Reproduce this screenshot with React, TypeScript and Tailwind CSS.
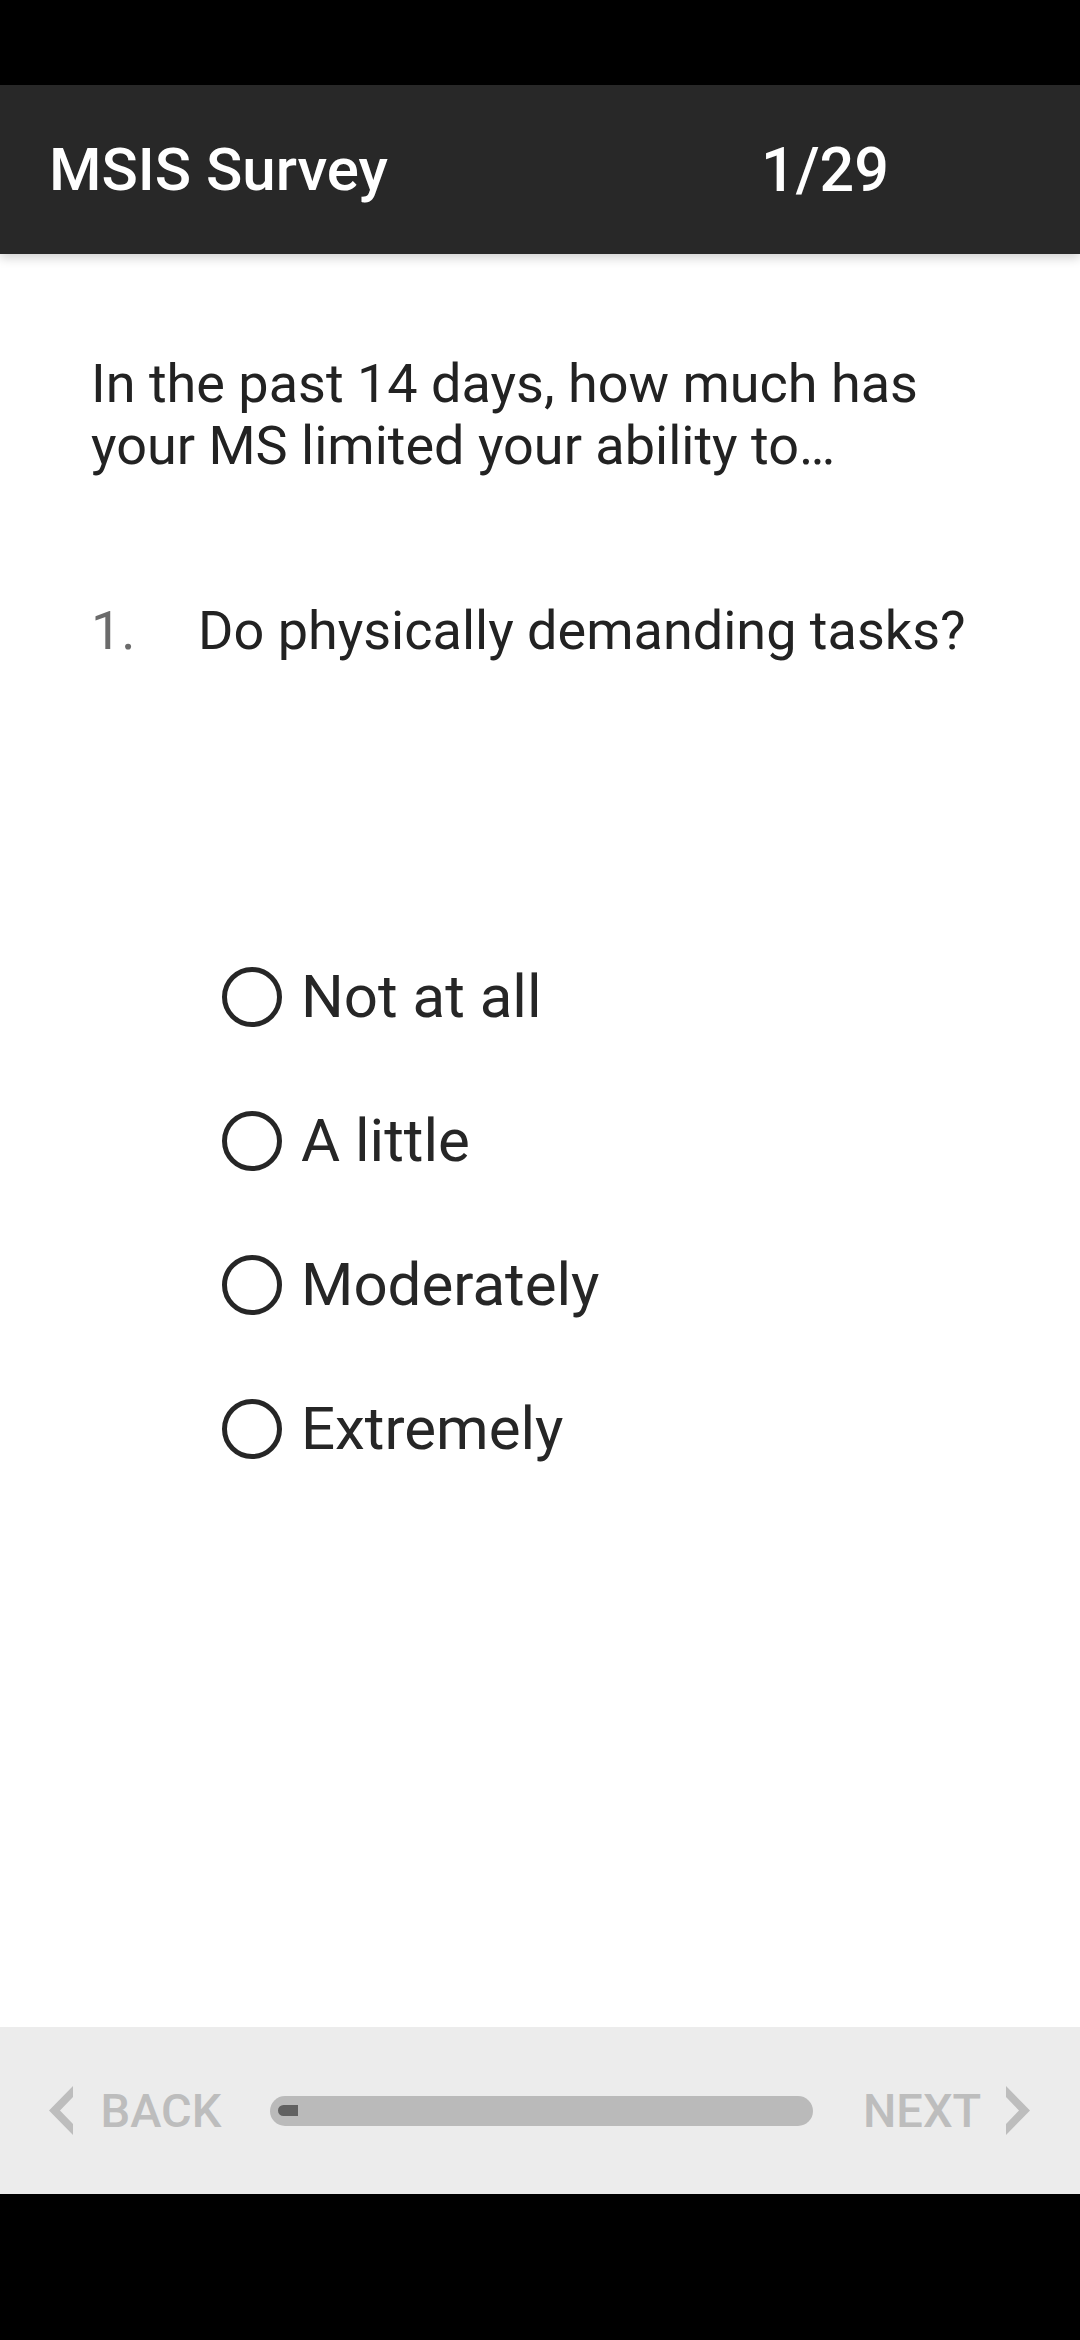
import React, { useState } from 'react';

const options = ['Not at all', 'A little', 'Moderately', 'Extremely'];

function Chevron({ dir }: { dir: 'left' | 'right' }) {
  const pts =
    dir === 'left'
      ? '24,0 24,11 11,24.5 24,38 24,49 0,24.5'
      : '0,0 0,11 13,24.5 0,38 0,49 24,24.5';
  return (
    <svg width="24" height="49" viewBox="0 0 24 49" className="shrink-0">
      <polygon points={pts} fill="#bdbdbd" />
    </svg>
  );
}

function Radio({ label, checked, onClick }: { label: string; checked: boolean; onClick: () => void }) {
  return (
    <button onClick={onClick} className="h-[144px] flex items-center text-left">
      <span className="w-[60px] h-[60px] rounded-full border-[5px] border-[#262626] flex items-center justify-center shrink-0">
        {checked && <span className="w-[30px] h-[30px] rounded-full bg-[#262626]" />}
      </span>
      <span className="ml-[19px] text-[60px] leading-[72px] text-[#262626]">{label}</span>
    </button>
  );
}

export default function App() {
  const [selected, setSelected] = useState<number | null>(null);

  return (
    <div className="w-[1080px] h-[2340px] flex flex-col bg-black font-['Roboto','Liberation_Sans',sans-serif] overflow-hidden">
      <div className="h-[85px] bg-black shrink-0" />

      <header className="h-[169px] shrink-0 bg-[#282828] text-white flex items-center pl-[49px] relative z-10 shadow-[0_4px_10px_rgba(0,0,0,0.18)]">
        <h1 className="w-[712px] text-[60px] leading-[70px] font-medium">MSIS Survey</h1>
        <span className="text-[61px] leading-[70px] font-medium">1/29</span>
      </header>

      <main className="flex-1 bg-white pl-[91px] pr-[60px] flex flex-col">
        <p className="mt-[99px] text-[54px] leading-[62px] text-[#222222] w-[900px]">
          In the past 14 days, how much has your MS limited your ability to…
        </p>

        <div className="mt-[122px] flex items-baseline text-[54px] leading-[64px]">
          <span className="w-[107px] text-[#6b6b6b]">1.</span>
          <span className="text-[#222222]">Do physically demanding tasks?</span>
        </div>

        <div className="mt-[262px] pl-[131px] flex flex-col items-start">
          {options.map((o, i) => (
            <Radio key={o} label={o} checked={selected === i} onClick={() => setSelected(i)} />
          ))}
        </div>
      </main>

      <footer className="h-[167px] shrink-0 bg-[#ececec] flex items-center pl-[49px]">
        <button className="flex items-center text-[#bdbdbd]">
          <Chevron dir="left" />
          <span className="ml-[27px] w-[122px] text-[47px] leading-[56px] font-medium">BACK</span>
        </button>

        <div className="ml-[48px] w-[543px] h-[30px] rounded-full bg-[#bababa] flex items-center">
          <div className="ml-[8px] w-[20px] h-[11px] rounded-l-full rounded-r-[2px] bg-[#616161]" />
        </div>

        <button className="ml-[50px] flex items-center text-[#bdbdbd]">
          <span className="w-[117px] text-[47px] leading-[56px] font-medium">NEXT</span>
          <span className="ml-[26px]">
            <Chevron dir="right" />
          </span>
        </button>
      </footer>

      <div className="h-[146px] bg-black shrink-0" />
    </div>
  );
}
